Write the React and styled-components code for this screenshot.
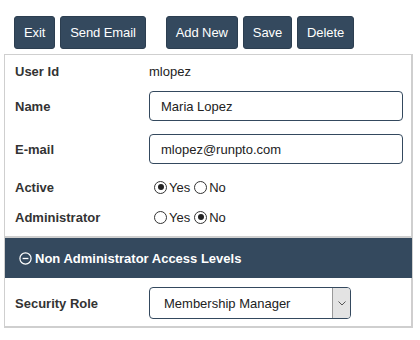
import React from 'react'
import styled, { createGlobalStyle } from 'styled-components'

const GlobalStyle = createGlobalStyle`
  body {
    margin: 0;
    background: #fff;
    font-family: "Liberation Sans", Arial, sans-serif;
    color: #333;
  }
`

const Page = styled.div`
  width: 420px;
  padding: 16px 8px 0 4px;
  box-sizing: border-box;
`

const Toolbar = styled.div`
  display: flex;
  gap: 5px;
  padding-left: 10px;
  margin-bottom: 5px;
`

const Spacer = styled.div`
  width: 10px;
`

const Button = styled.button`
  height: 33px;
  padding: 0 9px;
  background: #34495e;
  color: #fff;
  border: 1px solid #2c3e50;
  border-radius: 3px;
  font-family: "Liberation Sans", Arial, sans-serif;
  font-size: 13px;
  letter-spacing: -0.1px;
  cursor: pointer;
`

const Panel = styled.div`
  border: 1px solid #cfcfcf;
  border-right-width: 2px;
  border-bottom-width: 2px;
  width: 409px;
  box-sizing: border-box;
`

const Form = styled.div`
  display: flex;
  flex-direction: column;
  padding: 4px 0 7px 10px;
`

const Row = styled.div`
  display: grid;
  grid-template-columns: 134px 254px;
  align-items: center;
  min-height: ${p => p.h || 31}px;
  margin-top: ${p => p.mt || 0}px;
`

const Label = styled.label`
  font-weight: bold;
  font-size: 13px;
  color: #333;
`

const Value = styled.span`
  font-size: 13px;
  color: #222;
`

const TextInput = styled.input`
  height: 30px;
  width: 254px;
  box-sizing: border-box;
  border: 1px solid #34495e;
  border-radius: 4px;
  padding: 0 11px;
  font-family: "Liberation Sans", Arial, sans-serif;
  font-size: 13px;
  color: #222;
  outline: none;
`

const Radios = styled.div`
  display: flex;
  align-items: center;
  padding-left: 5px;
  font-size: 13px;
  color: #222;
`

const Radio = styled.span`
  display: inline-block;
  width: 13px;
  height: 13px;
  border: 1px solid #333;
  border-radius: 50%;
  box-sizing: border-box;
  margin: 0 2px 0 ${p => (p.first ? 0 : 4)}px;
  position: relative;
  background: #fff;

  &::after {
    content: '';
    display: ${p => (p.checked ? 'block' : 'none')};
    position: absolute;
    left: 2.5px;
    top: 2.5px;
    width: 6px;
    height: 6px;
    border-radius: 50%;
    background: #222;
  }
`

const SectionHeader = styled.div`
  display: flex;
  align-items: center;
  gap: 3px;
  height: 40px;
  margin-right: -1px;
  padding-left: 14px;
  border-top: 2px solid #cfcfcf;
  background: #34495e;
  color: #fff;
  font-weight: bold;
  font-size: 13px;
`

const Section = styled.div`
  padding: 9px 0 7px 10px;
`

const SelectBox = styled.div`
  display: flex;
  width: 202px;
  height: 32px;
  box-sizing: border-box;
  border: 1px solid #34495e;
  border-radius: 4px;
  overflow: hidden;
  font-size: 13px;
  color: #222;
`

const SelectText = styled.div`
  flex: 1;
  display: flex;
  align-items: center;
  padding-left: 14px;
`

const SelectArrow = styled.div`
  width: 17px;
  display: flex;
  align-items: center;
  justify-content: center;
  background: #e3e3e3;
  border-left: 1px solid #999;
`

function RadioGroup({ value }) {
  return (
    <Radios>
      <Radio first checked={value} />Yes
      <Radio checked={!value} />No
    </Radios>
  )
}

export default function App() {
  return (
    <Page>
      <GlobalStyle />
      <Toolbar>
        <Button>Exit</Button>
        <Button>Send Email</Button>
        <Spacer />
        <Button>Add New</Button>
        <Button>Save</Button>
        <Button>Delete</Button>
      </Toolbar>
      <Panel>
        <Form>
          <Row h={24}>
            <Label>User Id</Label>
            <Value>mlopez</Value>
          </Row>
          <Row h={30} mt={8}>
            <Label>Name</Label>
            <TextInput defaultValue="Maria Lopez" />
          </Row>
          <Row h={30} mt={13}>
            <Label>E-mail</Label>
            <TextInput defaultValue="mlopez@runpto.com" />
          </Row>
          <Row h={24} mt={11}>
            <Label>Active</Label>
            <RadioGroup value={true} />
          </Row>
          <Row h={24} mt={6}>
            <Label>Administrator</Label>
            <RadioGroup value={false} />
          </Row>
        </Form>
        <SectionHeader>
          <svg width="13" height="13" viewBox="0 0 13 13">
            <circle cx="6.5" cy="6.5" r="5.6" fill="none" stroke="#fff" strokeWidth="1.2" />
            <line x1="3.6" y1="6.5" x2="9.4" y2="6.5" stroke="#fff" strokeWidth="1.3" />
          </svg>
          Non Administrator Access Levels
        </SectionHeader>
        <Section>
          <Row h={32}>
            <Label>Security Role</Label>
            <SelectBox>
              <SelectText>Membership Manager</SelectText>
              <SelectArrow>
                <svg width="8" height="5" viewBox="0 0 8 5">
                  <path d="M0.5 0.5 L4 4 L7.5 0.5" fill="none" stroke="#555" strokeWidth="1" />
                </svg>
              </SelectArrow>
            </SelectBox>
          </Row>
        </Section>
      </Panel>
    </Page>
  )
}
